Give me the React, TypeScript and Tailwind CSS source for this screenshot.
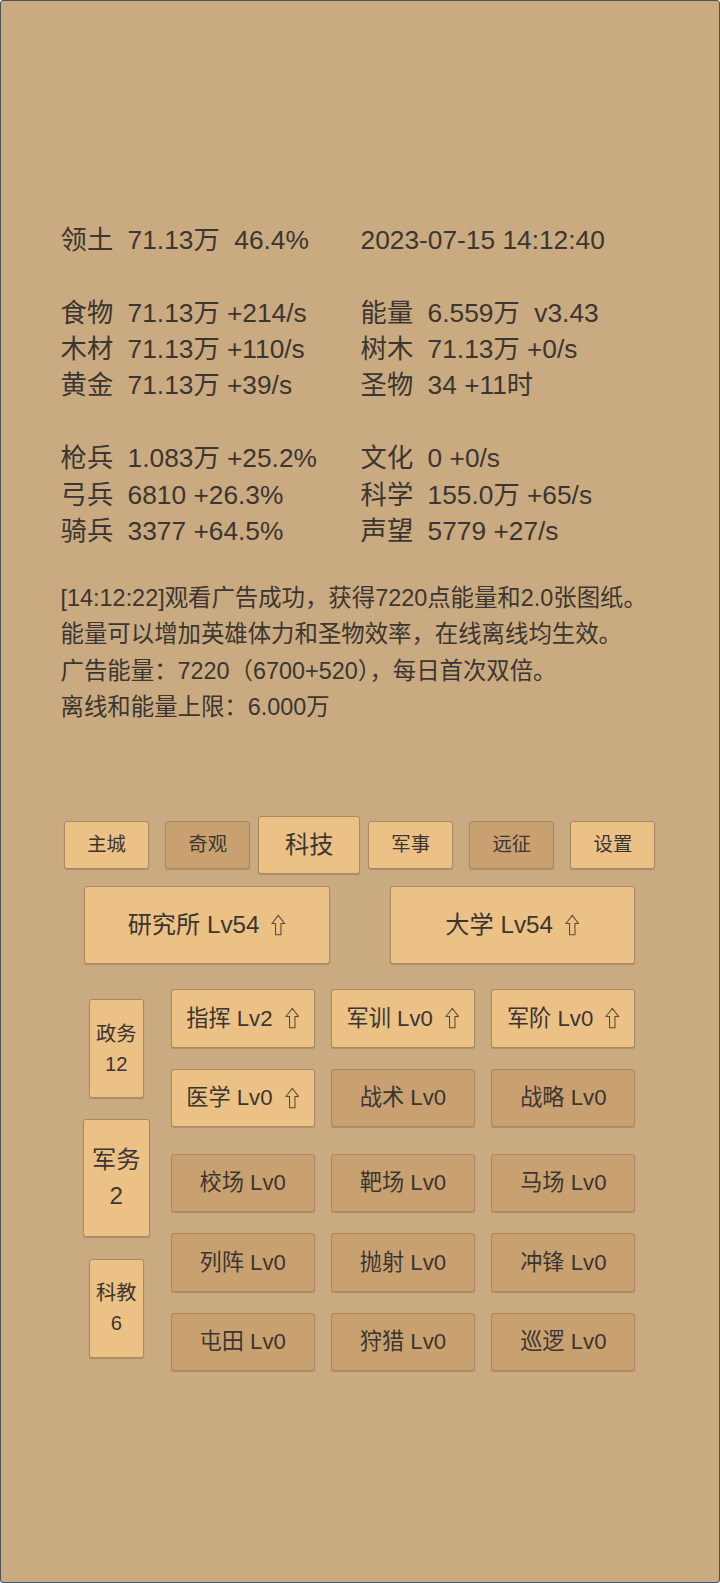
import { clsx } from 'clsx'

const FONT = { fontFamily: '"Liberation Sans", "Noto Sans CJK SC", sans-serif' }

const LEFT_STATS: (string | null)[][] = [
  ['领土', '71.13万  46.4%'],
  [],
  ['食物', '71.13万 +214/s'],
  ['木材', '71.13万 +110/s'],
  ['黄金', '71.13万 +39/s'],
  [],
  ['枪兵', '1.083万 +25.2%'],
  ['弓兵', '6810 +26.3%'],
  ['骑兵', '3377 +64.5%'],
]

const RIGHT_STATS: (string | null)[][] = [
  [null, '2023-07-15 14:12:40'],
  [],
  ['能量', '6.559万  v3.43'],
  ['树木', '71.13万 +0/s'],
  ['圣物', '34 +11时'],
  [],
  ['文化', '0 +0/s'],
  ['科学', '155.0万 +65/s'],
  ['声望', '5779 +27/s'],
]

const LOG = [
  '[14:12:22]观看广告成功，获得7220点能量和2.0张图纸。',
  '能量可以增加英雄体力和圣物效率，在线离线均生效。',
  '广告能量：7220（6700+520），每日首次双倍。',
  '离线和能量上限：6.000万',
]

const TABS = [
  { label: '主城', dark: false },
  { label: '奇观', dark: true },
  { label: '科技', dark: false, active: true },
  { label: '军事', dark: false },
  { label: '远征', dark: true },
  { label: '设置', dark: false },
]

type Tech = { name: string; lv: number; up?: boolean }

const GROUP_A: Tech[] = [
  { name: '指挥', lv: 2, up: true },
  { name: '军训', lv: 0, up: true },
  { name: '军阶', lv: 0, up: true },
  { name: '医学', lv: 0, up: true },
  { name: '战术', lv: 0 },
  { name: '战略', lv: 0 },
]

const GROUP_B: Tech[] = [
  { name: '校场', lv: 0 },
  { name: '靶场', lv: 0 },
  { name: '马场', lv: 0 },
  { name: '列阵', lv: 0 },
  { name: '抛射', lv: 0 },
  { name: '冲锋', lv: 0 },
  { name: '屯田', lv: 0 },
  { name: '狩猎', lv: 0 },
  { name: '巡逻', lv: 0 },
]

const light = 'bg-[#ebc186]'
const dark = 'bg-[#c9a170]'
const btn = 'flex items-center justify-center rounded-[3px] border border-[#aa8960] text-[#3b3631] shadow-[0_1px_1px_rgba(90,60,30,0.25)]'

// outlined "upgrade available" arrow
function Up({ size = 22 }: { size?: number }) {
  return (
    <svg
      className="ml-[12px] shrink-0"
      width={size * 0.66}
      height={size}
      viewBox="0 0 15 22"
      fill="none"
      stroke="#5a4a38"
      strokeWidth="1.1"
    >
      <path d="M7.5 1 L14 9.5 L10.3 9.5 L10.3 21 L4.7 21 L4.7 9.5 L1 9.5 Z" />
    </svg>
  )
}

function StatCol({ rows }: { rows: (string | null)[][] }) {
  return (
    <div className="flex flex-col">
      {rows.map((r, i) =>
        r.length === 0 ? (
          <div key={i} className="h-[36.4px]" />
        ) : (
          <div key={i} className="flex h-[36.4px] items-center whitespace-pre">
            {r[0] && <span className="w-[67px]">{r[0]}</span>}
            <span>{r[1]}</span>
          </div>
        ),
      )}
    </div>
  )
}

function TechBtn({ t }: { t: Tech }) {
  return (
    <div className={clsx(btn, 'h-[58.5px] text-[22.2px]', t.up ? light : dark)}>
      {t.name} Lv{t.lv}
      {t.up && <Up size={22} />}
    </div>
  )
}

export default function App() {
  return (
    <div
      className="h-[1583px] w-[720px] overflow-hidden rounded-[3px] border border-[#4d525d] bg-[#caaa80] text-[#3b3631]"
      style={FONT}
    >
      {/* stats */}
      <div className="grid grid-cols-[300px_1fr] pl-[59.6px] pt-[221.3px] text-[26.3px]">
        <StatCol rows={LEFT_STATS} />
        <StatCol rows={RIGHT_STATS} />
      </div>

      {/* log */}
      <div className="mt-[30px] pl-[59.6px] text-[23.4px] leading-[36.4px]">
        {LOG.map((l) => (
          <div key={l}>{l}</div>
        ))}
      </div>

      {/* tabs */}
      <div className="mt-[90.6px] ml-[55px] flex h-[57.6px] w-[607.5px] items-center">
        {TABS.map((t) => (
          <div key={t.label} className="flex flex-1 justify-center">
            <div
              className={clsx(
                btn,
                t.dark ? dark : light,
                t.active ? 'h-[57.6px] w-[102px] text-[24.2px]' : 'h-[48.3px] w-[85px] text-[19.4px]',
              )}
            >
              {t.label}
            </div>
          </div>
        ))}
      </div>

      {/* buildings */}
      <div className="mt-[12.1px] ml-[83px] flex gap-[60px]">
        <div className={clsx(btn, light, 'h-[78.3px] w-[245.6px] text-[24.2px]')}>
          研究所 Lv54
          <Up size={22} />
        </div>
        <div className={clsx(btn, light, 'h-[78.3px] w-[245.6px] text-[24.2px]')}>
          大学 Lv54
          <Up size={22} />
        </div>
      </div>

      {/* tech */}
      <div className="mt-[25px] ml-[82px] flex gap-[21px]">
        <div className="flex w-[66.5px] flex-col items-center gap-[21.4px] pt-[10px]">
          <div className={clsx(btn, light, 'h-[99px] w-[55.5px] flex-col text-[20.2px] leading-[30px]')}>
            <span>政务</span>
            <span>12</span>
          </div>
          <div className={clsx(btn, light, 'h-[118px] w-[66.5px] flex-col text-[24.2px] leading-[36px]')}>
            <span>军务</span>
            <span>2</span>
          </div>
          <div className={clsx(btn, light, 'h-[99px] w-[55.5px] flex-col text-[20.2px] leading-[30px]')}>
            <span>科教</span>
            <span>6</span>
          </div>
        </div>

        <div className="flex w-[465px] flex-col gap-[26.5px]">
          <div className="grid grid-cols-3 gap-x-[16px] gap-y-[21px]">
            {GROUP_A.map((t) => (
              <TechBtn key={t.name} t={t} />
            ))}
          </div>
          <div className="grid grid-cols-3 gap-x-[16px] gap-y-[21px]">
            {GROUP_B.map((t) => (
              <TechBtn key={t.name} t={t} />
            ))}
          </div>
        </div>
      </div>
    </div>
  )
}
